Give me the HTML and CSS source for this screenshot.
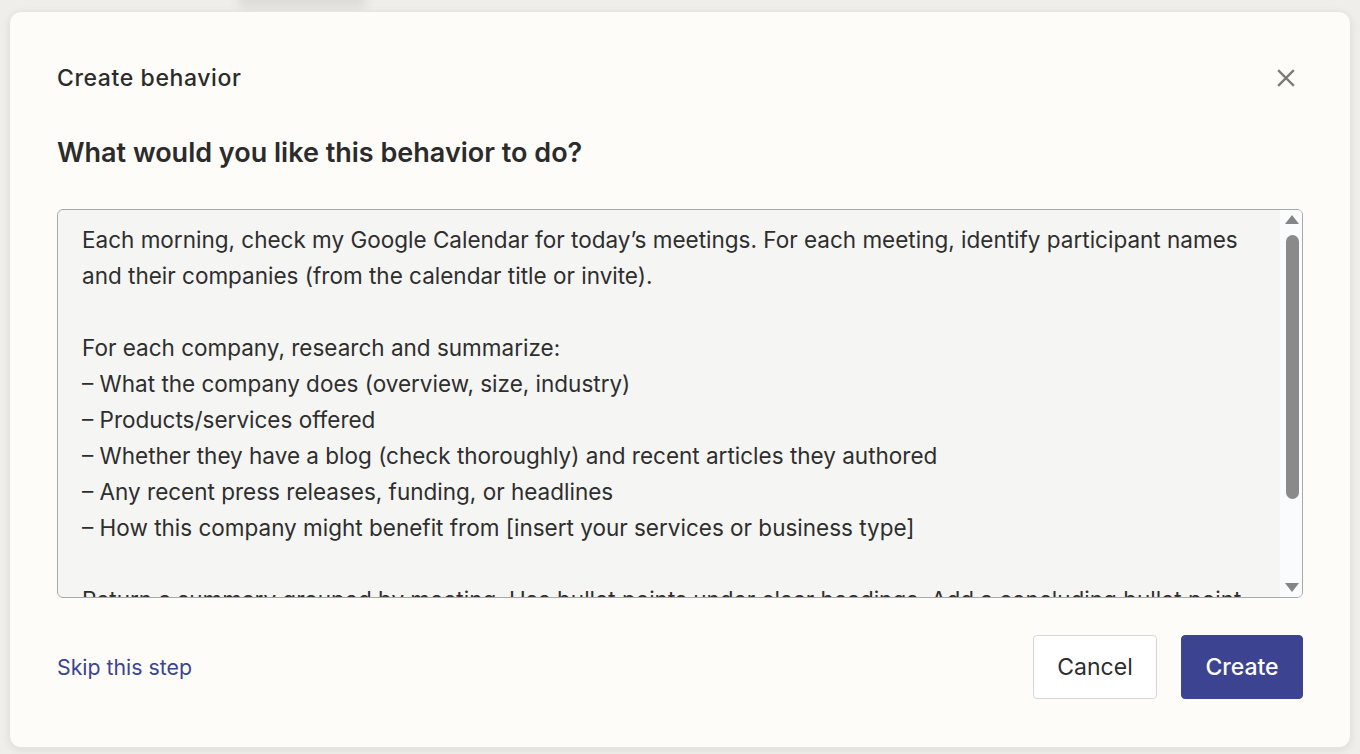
FILE: index.html
```html
<!DOCTYPE html>
<html lang="en">
<head>
<meta charset="utf-8">
<title>Create behavior</title>
<link rel="stylesheet" href="styles.css">
</head>
<body>
<div class="backdrop-ghost"></div>
<div class="modal">
  <div class="modal-header">
    <h1 class="modal-title">Create behavior</h1>
    <button class="close-btn" aria-label="Close">
      <svg width="18" height="18" viewBox="0 0 18 18"><path d="M2 2 L16 16 M16 2 L2 16" stroke="#7a7a78" stroke-width="2.4" stroke-linecap="square"/></svg>
    </button>
  </div>
  <h2 class="question">What would you like this behavior to do?</h2>
  <div class="textbox">
    <div class="textbox-content">
      <p>Each morning, check my Google Calendar for today’s meetings. For each meeting, identify participant names and their companies (from the calendar title or invite).</p>
      <p class="blank">&nbsp;</p>
      <p>For each company, research and summarize:</p>
      <p>– What the company does (overview, size, industry)</p>
      <p>– Products/services offered</p>
      <p>– Whether they have a blog (check thoroughly) and recent articles they authored</p>
      <p>– Any recent press releases, funding, or headlines</p>
      <p>– How this company might benefit from [insert your services or business type]</p>
      <p class="blank">&nbsp;</p>
      <p>Return a summary grouped by meeting. Use bullet points under clear headings. Add a concluding bullet point with suggested talking points.</p>
    </div>
    <div class="scrollbar">
      <div class="arrow up"></div>
      <div class="track"><div class="thumb"></div></div>
      <div class="arrow down"></div>
    </div>
  </div>
  <div class="modal-footer">
    <a class="skip-link" href="#">Skip this step</a>
    <div class="actions">
      <button class="btn btn-secondary">Cancel</button>
      <button class="btn btn-primary">Create</button>
    </div>
  </div>
</div>
</body>
</html>
```
FILE: styles.css
```css
* { box-sizing: border-box; }
html, body { margin: 0; padding: 0; }
body {
  background: #efeeea;
  font-family: Inter, "Noto Sans", "Liberation Sans", sans-serif;
  color: #2d2d2d;
  height: 754px;
  overflow: hidden;
  padding: 11px 9px 6px 9px;
  position: relative;
}
.backdrop-ghost {
  position: absolute;
  left: 238px;
  top: -8px;
  width: 128px;
  height: 16px;
  background: #dcdbd6;
  filter: blur(5px);
  border-radius: 6px;
}
.modal {
  position: relative;
  height: 737px;
  background: #fdfcf9;
  border: 1px solid #e6e5e1;
  border-radius: 12px;
  box-shadow: 0 2px 8px rgba(0,0,0,0.08);
  padding: 52px 47px 0 47px;
  display: flex;
  flex-direction: column;
}
.modal-header {
  display: flex;
  justify-content: space-between;
  align-items: center;
  height: 28px;
}
.modal-title {
  margin: 0;
  font-size: 23px;
  font-weight: 500;
  line-height: 28px;
  letter-spacing: 0.6px;
  color: #2b2b2b;
}
.close-btn {
  background: none;
  border: none;
  padding: 0;
  width: 18px;
  height: 18px;
  margin-right: 8px;
  display: flex;
}
.question {
  margin: 45px 0 0 0;
  font-size: 27px;
  font-weight: 600;
  line-height: 32px;
  color: #2b2b2b;
}
.textbox {
  margin-top: 40px;
  height: 389px;
  border: 1px solid #a9a9a7;
  border-radius: 6px;
  background: #f5f5f3;
  display: flex;
  overflow: hidden;
}
.textbox-content {
  flex: 1;
  padding: 12px 26px 0 24px;
  font-size: 22.5px;
  line-height: 36px;
  color: #2e2e2e;
  overflow: hidden;
}
.textbox-content p { margin: 0; }
.scrollbar {
  width: 22px;
  background: #fafbfc;
  display: flex;
  flex-direction: column;
  align-items: center;
  padding: 5px 0 5px 2px;
}
.arrow {
  width: 0;
  height: 0;
  border-left: 7px solid transparent;
  border-right: 7px solid transparent;
}
.arrow.up { border-bottom: 9px solid #858585; }
.arrow.down { border-top: 9px solid #858585; }
.track {
  flex: 1;
  width: 100%;
  display: flex;
  justify-content: center;
  padding-top: 11px;
}
.thumb {
  width: 13px;
  height: 264px;
  background: #8a8a8a;
  border-radius: 7px;
}
.modal-footer {
  margin-top: 37px;
  display: flex;
  justify-content: space-between;
  align-items: center;
}
.skip-link {
  color: #3b4491;
  font-size: 21.3px;
  text-decoration: none;
  line-height: 28px;
}
.actions {
  display: flex;
  gap: 24px;
}
.btn {
  font-family: inherit;
  font-size: 23px;
  height: 64px;
  border-radius: 4px;
  padding: 0;
  cursor: pointer;
}
.btn-secondary {
  background: #ffffff;
  color: #2d2d2d;
  border: 1px solid #d8d7d3;
  width: 124px;
}
.btn-primary {
  background: #3c4491;
  color: #ffffff;
  border: 1px solid #3c4491;
  font-weight: 500;
  width: 122px;
}
```
